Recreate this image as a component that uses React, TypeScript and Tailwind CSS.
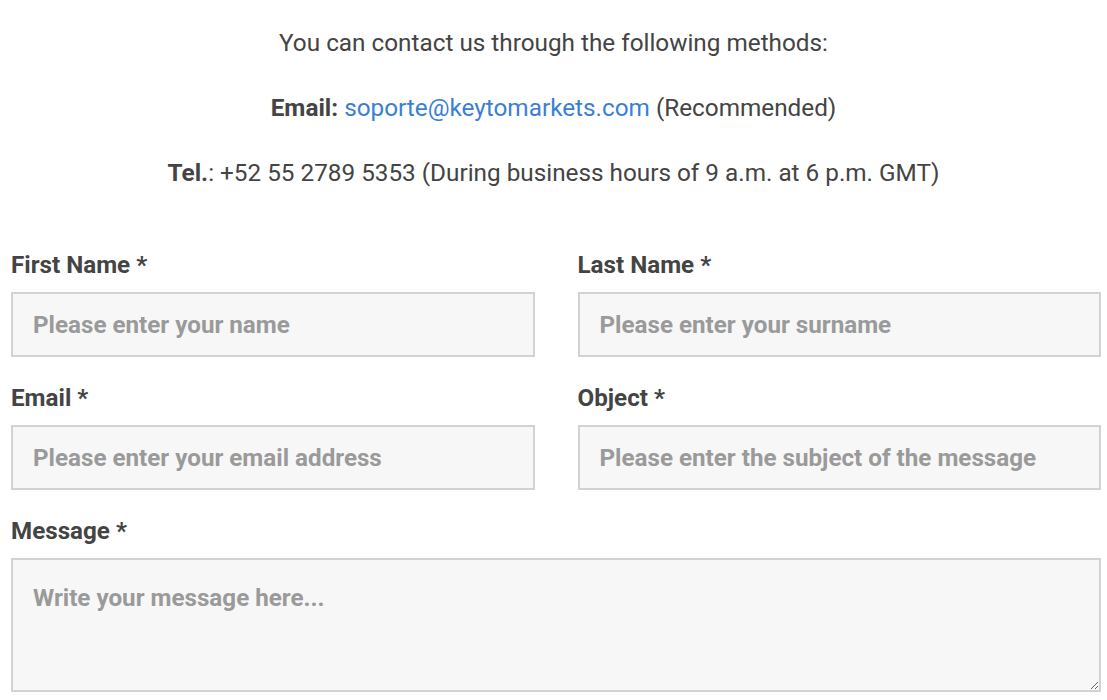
export default function App() {
  const font = { fontFamily: 'Roboto, "Liberation Sans", sans-serif' }

  return (
    <div className="min-h-screen bg-white text-[#444444]" style={font}>
      <div className="pt-[26px] flex flex-col items-center gap-[32px] text-[24.3px] leading-[33px]">
        <p>You can contact us through the following methods:</p>
        <p>
          <strong className="font-bold">Email:</strong>{' '}
          <a href="#" className="text-[#3a7fd5]">soporte@keytomarkets.com</a> (Recommended)
        </p>
        <p>
          <strong className="font-bold">Tel.</strong>: +52 55 2789 5353 (During business hours of 9 a.m. at 6 p.m. GMT)
        </p>
      </div>

      <form className="pl-[11px] pr-[6px] pt-[61px]">
        <div className="grid grid-cols-2 gap-x-[43px] gap-y-[26px]">
          <Field label="First Name *" placeholder="Please enter your name" />
          <Field label="Last Name *" placeholder="Please enter your surname" />
          <Field label="Email *" placeholder="Please enter your email address" />
          <Field label="Object *" placeholder="Please enter the subject of the message" />
        </div>
        <div className="mt-[26px]">
          <label className="block text-[24.2px] leading-[30px] font-bold text-[#444444] mb-[12px]">Message *</label>
          <textarea
            placeholder="Write your message here..."
            className="block w-full h-[134px] bg-[#f7f7f7] border-2 border-[#d2d2d2] px-[20px] py-[24px] text-[24.2px] leading-[28px] font-bold text-[#444444] placeholder:text-[#9a9a9a] outline-none"
            style={font}
          />
        </div>
      </form>
    </div>
  )
}

function Field({ label, placeholder }: { label: string; placeholder: string }) {
  return (
    <div>
      <label className="block text-[24.2px] leading-[30px] font-bold text-[#444444] mb-[12px]">{label}</label>
      <input
        type="text"
        placeholder={placeholder}
        className="block w-full h-[65px] bg-[#f7f7f7] border-2 border-[#d2d2d2] px-[20px] text-[24.2px] font-bold text-[#444444] placeholder:text-[#9a9a9a] outline-none"
        style={{ fontFamily: 'Roboto, "Liberation Sans", sans-serif' }}
      />
    </div>
  )
}
